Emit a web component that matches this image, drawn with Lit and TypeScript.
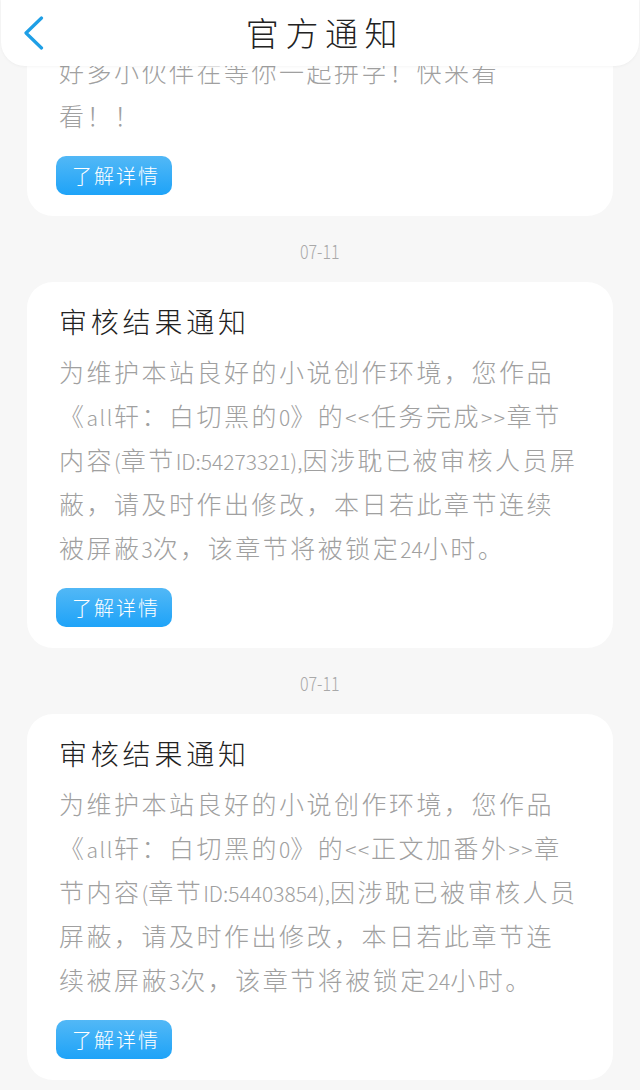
import { LitElement, css, html } from 'lit';
import { customElement } from 'lit/decorators.js';

const CARDS = [
  {
    date: '07-11',
    title: '审核结果通知',
    lines: [
      '为维护本站良好的小说创作环境，您作品',
      '《all轩：白切黑的0》的<<任务完成>>章节',
      '内容(章节ID:54273321),因涉耽已被审核人员屏',
      '蔽，请及时作出修改，本日若此章节连续',
      '被屏蔽3次，该章节将被锁定24小时。',
    ],
  },
  {
    date: '07-11',
    title: '审核结果通知',
    lines: [
      '为维护本站良好的小说创作环境，您作品',
      '《all轩：白切黑的0》的<<正文加番外>>章',
      '节内容(章节ID:54403854),因涉耽已被审核人员',
      '屏蔽，请及时作出修改，本日若此章节连',
      '续被屏蔽3次，该章节将被锁定24小时。',
    ],
  },
];

// latin and digit runs are narrower than the cjk text around them, digits most of all
const renderLine = (text: string) =>
  text.split(/([\x21-\x7e]+)/).map((part, i) => {
    if (!(i % 2)) return part;
    const wide = part === 'all' || part === '<<' || part === '>>';
    return html`<span class="latin ${wide ? 'wide' : ''}">${part}</span>`;
  });

@customElement('app-root')
export class AppRoot extends LitElement {
  static styles = css`
    :host {
      display: block;
      position: relative;
      width: 640px;
      height: 1090px;
      overflow: hidden;
      background: #f7f7f7;
      font-family: "Noto Sans CJK SC", "Noto Sans", sans-serif;
    }

    .header {
      position: absolute;
      top: 0;
      left: 1px;
      right: 1px;
      height: 66px;
      display: flex;
      align-items: center;
      justify-content: center;
      background: #fff;
      border-radius: 0 0 24px 24px;
      box-shadow: 0 1px 3px rgba(0, 0, 0, 0.04);
    }

    .back {
      position: absolute;
      left: 20px;
      top: 16px;
    }

    .header-title {
      font-size: 33px;
      font-weight: 300;
      letter-spacing: 6.6px;
      padding-left: 10px;
      color: #222;
      line-height: 64px;
      height: 66px;
    }

    .list {
      display: flex;
      flex-direction: column;
      padding: 0 27px;
    }

    .card {
      display: flex;
      flex-direction: column;
      align-items: flex-start;
      background: #fff;
      border-radius: 26px;
      padding: 19px 30px 21px 32px;
    }

    .card.first {
      padding-top: 49px;
      border-radius: 0 0 26px 26px;
    }

    .title {
      height: 40px;
      line-height: 40px;
      font-size: 28px;
      font-weight: 300;
      letter-spacing: 3.8px;
      color: #222;
      margin-bottom: 8px;
    }

    .line {
      height: 44px;
      line-height: 44px;
      font-size: 25px;
      font-weight: 300;
      letter-spacing: 2.5px;
      color: #a0a0a0;
      white-space: nowrap;
    }

    .latin {
      font-size: 21px;
      letter-spacing: 0;
    }

    .latin.wide {
      letter-spacing: 1.6px;
    }

    .btn {
      box-sizing: border-box;
      width: 116px;
      height: 39px;
      margin-top: 19px;
      margin-left: -3px;
      padding-left: 4px;
      display: flex;
      align-items: center;
      justify-content: center;
      border-radius: 10px;
      background: linear-gradient(#52b8f6, #1ea3f8);
      color: #fff;
      font-size: 20px;
      font-weight: 300;
      letter-spacing: 2px;
    }

    .date {
      height: 66px;
      line-height: 70px;
      text-align: center;
      font-size: 20px;
      font-weight: 300;
      color: #a9a9a9;
    }

    .date span {
      display: inline-block;
      transform: scaleX(0.8);
    }
  `;

  render() {
    return html`
      <div class="list">
        <div class="card first">
          <div class="line">好多小伙伴在等你一起拼字！快来看</div>
          <div class="line">看！！</div>
          <div class="btn">了解详情</div>
        </div>
        ${CARDS.map(
          (c) => html`
            <div class="date"><span>${c.date}</span></div>
            <div class="card">
              <div class="title">${c.title}</div>
              ${c.lines.map((l) => html`<div class="line">${renderLine(l)}</div>`)}
              <div class="btn">了解详情</div>
            </div>
          `,
        )}
      </div>
      <div class="header">
        <svg class="back" width="26" height="34" viewBox="0 0 26 34" fill="none">
          <path d="M20.5 2 L5 17 L20.5 32" stroke="#1e9fe6" stroke-width="3.2" stroke-linecap="round" stroke-linejoin="round" />
        </svg>
        <div class="header-title">官方通知</div>
      </div>
    `;
  }
}
